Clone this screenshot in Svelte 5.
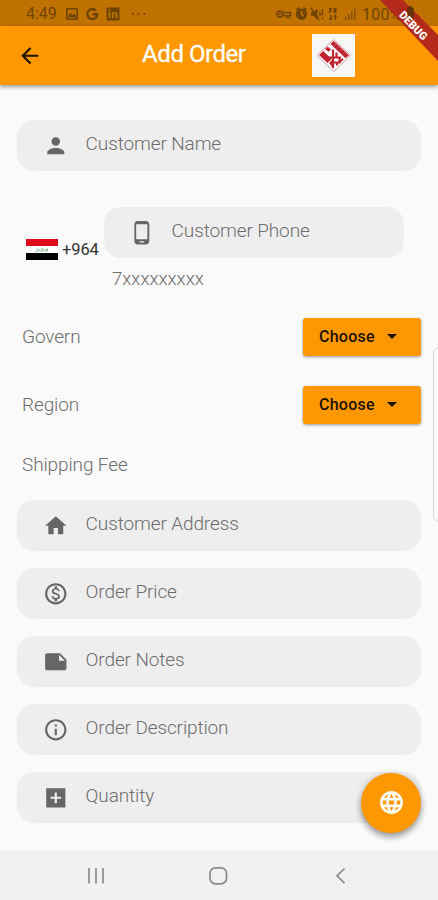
<script>
  const icons = {
    person: 'M12 12c2.21 0 4-1.79 4-4s-1.79-4-4-4-4 1.79-4 4 1.79 4 4 4zm0 2c-2.67 0-8 1.34-8 4v2h16v-2c0-2.66-5.33-4-8-4z',
    phone: 'M16 1H8C6.34 1 5 2.34 5 4v16c0 1.66 1.34 3 3 3h8c1.66 0 3-1.34 3-3V4c0-1.66-1.34-3-3-3zm-2 20h-4v-1h4v1zm3.25-3H6.75V4h10.5v14z',
    home: 'M10 20v-6h4v6h5v-8h3L12 3 2 12h3v8z',
    price: 'M12 2C6.48 2 2 6.48 2 12s4.48 10 10 10 10-4.48 10-10S17.52 2 12 2zm0 18c-4.41 0-8-3.59-8-8s3.59-8 8-8 8 3.59 8 8-3.59 8-8 8zm.31-8.86c-1.77-.45-2.34-.94-2.34-1.67 0-.84.79-1.43 2.1-1.43 1.38 0 1.9.66 1.94 1.64h1.71c-.05-1.34-.87-2.57-2.49-2.97V5H10.9v1.69c-1.51.32-2.72 1.3-2.72 2.81 0 1.79 1.49 2.69 3.66 3.21 1.95.46 2.34 1.15 2.34 1.87 0 .53-.39 1.39-2.1 1.39-1.6 0-2.23-.72-2.32-1.64H8.04c.1 1.7 1.36 2.66 2.86 2.97V19h2.34v-1.67c1.52-.29 2.72-1.16 2.73-2.77-.01-2.2-1.9-2.96-3.66-3.42z',
    note: 'M22 10l-6-6H4c-1.1 0-2 .9-2 2v12.01c0 1.1.9 1.99 2 1.99l16-.01c1.1 0 2-.89 2-1.99v-8zm-7-4.5l5.5 5.5H15V5.5z',
    info: 'M11 17h2v-6h-2v6zm1-15C6.48 2 2 6.48 2 12s4.48 10 10 10 10-4.48 10-10S17.52 2 12 2zm0 18c-4.41 0-8-3.59-8-8s3.59-8 8-8 8 3.59 8 8-3.59 8-8 8zM11 9h2V7h-2v2z',
    add: 'M21 3H3v18h18V3zm-4 10h-4v4h-2v-4H7v-2h4V7h2v4h4v2z'
  };
  const fields = [
    { icon: 'home', label: 'Customer Address' },
    { icon: 'price', label: 'Order Price' },
    { icon: 'note', label: 'Order Notes' },
    { icon: 'info', label: 'Order Description' },
    { icon: 'add', label: 'Quantity' }
  ];
  const selects = ['Govern', 'Region'];
</script>

{#snippet field(icon, label)}
  <div class="field">
    <svg class="ficon" viewBox="0 0 24 24"><path d={icons[icon]} /></svg>
    <span class="label">{label}</span>
  </div>
{/snippet}

<div class="screen">
  <div class="status">
    <span class="time">4:49</span>
    <svg class="notif" width="84" height="16" viewBox="0 0 84 16">
      <path fill-rule="evenodd" d="M3 2h10q1 0 1 1v10q0 1-1 1H3q-1 0-1-1V3q0-1 1-1zm.7 1.600v8.800h8.700V3.600zM4.500 11.500v-2l2.300-2.500 1.700 2 1.500-1.800 2 2.300v2z" />
      <path d="M32 4.700A5 5 0 1 0 33.300 8.300H28.500" fill="none" stroke="#6f4500" stroke-width="2.400" />
      <path fill-rule="evenodd" d="M43.500 1.500h11q1 0 1 1v11q0 1-1 1h-11q-1 0-1-1v-11q0-1 1-1zM44.500 6.300v6h1.800v-6zm0-2.800v1.700h1.800V3.500zM47.800 6.300v6h1.800V9q0-1.200 1-1.200t1 1.200v3.300h1.800V8.800q0-2.700-2.200-2.700-1 0-1.600.9v-.7z" />
      <circle cx="69" cy="8" r="1.100" /><circle cx="74.500" cy="8" r="1.100" /><circle cx="80.500" cy="8" r="1.100" />
    </svg>
    <svg class="sys" width="84" height="16" viewBox="0 0 84 16">
      <g fill="none" stroke="#6f4500" stroke-width="1.500">
        <circle cx="4" cy="8" r="3" /><circle cx="4" cy="8" r=".5" />
        <path d="M7 6.500h7.500v3H13v2h-2v-2H7.500" />
      </g>
      <path fill-rule="evenodd" d="M20 3l3-2 1 1.300-3 2zM31 3l-3-2-1 1.300 3 2zM25.500 2.500a5.700 5.700 0 1 0 .01 0zM24.700 5h1.500v3l2 1.600-.9 1.100-2.600-2z" />
      <path d="M35 6h2.500l4-3.500v11l-4-3.500H35z" />
      <path d="M35 2l8 12M43.500 6q1.500 2 0 4.500M46.500 3v6.500M46.500 11.500v2" fill="none" stroke="#6f4500" stroke-width="1.400" />
      <path d="M53 2h3v1.200h-1.500v.8H56v1.200h-1.500V7H53zM57.500 2h3v5h-3zM52.800 12h4l-2 2.700zM57.300 11h4l-2-2.700z" />
      <path d="M54.200 9h1.300v4h-1.300zM58.700 10h1.300v4h-1.300z" />
      <path d="M69 11h1.700v3H69zM72 8.500h1.700V14H72zM75 5.500h1.500V14H75zM78 2.500h1.500V14H78z" opacity=".7" />
    </svg>
    <span class="battery">100%</span>
  </div>

  <header>
    <svg class="back" viewBox="0 0 24 24"><path d="M20 11H7.830l5.590-5.590L12 4l-8 8 8 8 1.410-1.410L7.830 13H20v-2z" /></svg>
    <h1>Add Order</h1>
    <div class="logo">
      <svg width="43" height="43" viewBox="0 0 43 43">
        <path d="M21.700 5.500L38.500 21.300 21.700 37.500 5 21.300z" fill="#fff" stroke="#dc9a9f" stroke-width="1" />
        <path d="M21.700 7L37 21.300l-3.500 3L18.500 10z" fill="#c02330" />
        <path d="M22 12l3-3M25 14.500l3-3M28 17.500l3-3M31 20.500l3-3" stroke="#d8646c" stroke-width=".7" />
        <path d="M7 21l4.200-4 8.300 8-4 4zM13 15l2.700-2.500 3.300 3-2.500 2.300z" fill="#c02330" />
        <path d="M21 15.500V34M13 23.500h16M24.500 18.500v5M25 27.500v4M21 28.500h6.500v-5" fill="none" stroke="#c02330" stroke-width="2.200" />
        <path d="M17 29l4-4 1 10zM27.500 26.500l3-2.500 1 1.800-4.500 4z" fill="#c02330" />
      </svg>
    </div>
  </header>

  <main>
    {@render field('person', 'Customer Name')}

    <div class="phone">
      <div class="country">
        <svg width="32" height="21" viewBox="0 0 32 21">
          <rect width="32" height="21" fill="#fff" /><rect width="32" height="7" fill="#dc0b17" /><rect y="14" width="32" height="7" fill="#000" />
          <path d="M9.500 12h3.500V10M14 12h3l1-2M18.500 12h3V9.500M11 10l1-1M16 9v2.500M20 10v1.500" fill="none" stroke="#7fb08a" stroke-width=".9" />
        </svg>
        <span>+964</span>
      </div>
      <div class="entry">
        {@render field('phone', 'Customer Phone')}
        <div class="hint">7xxxxxxxxx</div>
      </div>
    </div>

    <div class="selects">
      {#each selects as name}
        <div class="row">
          <span class="label">{name}</span>
          <button>Choose<svg width="10" height="5" viewBox="0 0 10 5"><path d="M0 0h10L5 5z" /></svg></button>
        </div>
      {/each}
    </div>
    <div class="fee label">Shipping Fee</div>

    <div class="list">
      {#each fields as f}
        {@render field(f.icon, f.label)}
      {/each}
    </div>
  </main>

  <nav>
    <svg width="438" height="50" viewBox="0 0 438 50" fill="none" stroke="#8b8b8b" stroke-width="1.700">
      <path d="M89 18v15.500M96 18v15.500M103 18v15.500" />
      <rect x="210" y="17.800" width="16.500" height="16" rx="5.500" />
      <path d="M344.500 18.500l-7.500 7.300 7.500 7.300" />
    </svg>
  </nav>

  <div class="edge"></div>
  <button class="fab" aria-label="Language">
    <svg viewBox="0 0 24 24"><path d="M11.990 2C6.470 2 2 6.480 2 12s4.470 10 9.990 10C17.520 22 22 17.520 22 12S17.520 2 11.990 2zm6.930 6h-2.950c-.32-1.250-.78-2.450-1.380-3.560 1.840.63 3.370 1.910 4.330 3.560zM12 4.040c.83 1.200 1.480 2.530 1.910 3.960h-3.820c.43-1.430 1.080-2.760 1.910-3.960zM4.260 14C4.100 13.360 4 12.690 4 12s.1-1.360.26-2h3.380c-.08.66-.14 1.320-.14 2s.06 1.340.14 2H4.260zm.82 2h2.950c.32 1.250.78 2.450 1.380 3.560-1.840-.63-3.370-1.900-4.330-3.560zm2.950-8H5.080c.96-1.660 2.490-2.930 4.330-3.560C8.810 5.550 8.350 6.750 8.030 8zM12 19.960c-.83-1.200-1.480-2.530-1.910-3.960h3.820c-.43 1.430-1.080 2.760-1.910 3.960zM14.340 14H9.660c-.09-.66-.16-1.320-.16-2s.07-1.350.16-2h4.680c.09.65.16 1.320.16 2s-.07 1.340-.16 2zm.25 5.560c.6-1.110 1.060-2.310 1.380-3.560h2.950c-.96 1.650-2.490 2.930-4.330 3.560zM16.360 14c.08-.66.14-1.320.14-2s-.06-1.340-.14-2h3.380c.16.64.26 1.310.26 2s-.1 1.360-.26 2h-3.380z" /></svg>
  </button>
  <svg class="debug" width="64" height="64" viewBox="0 0 64 64">
    <path d="M6 0H29L64 35V61z" fill="#b3291a" />
    <path d="M33 7.500h2V6h3v1.500h2V20h-7z" fill="#57330a" opacity=".8" />
    <text transform="translate(39.500 25.500) rotate(46)" text-anchor="middle" y="4">DEBUG</text>
  </svg>
</div>

<style>
  :global(body) { margin: 0; }
  .screen { position: relative; width: 438px; height: 900px; overflow: hidden; display: flex; flex-direction: column; background: #fafafa; font-family: Roboto, "Noto Sans", sans-serif; }
  .status { height: 26px; flex: none; display: flex; align-items: center; background: #bf7200; color: #6f4500; fill: #6f4500; padding-left: 26px; }
  .time { width: 38px; font-size: 16px; line-height: 26px; padding-top: 2px; }
  .notif { margin-top: 1px; }
  .sys { margin: 2px 0 0 128px; }
  .battery { font-size: 16px; padding-top: 2px; margin-left: 2px; letter-spacing: 0.2px; }
  header { position: relative; z-index: 1; height: 59px; flex: none; display: flex; align-items: center; background: #ff9800; box-shadow: 0 2px 4px rgba(0, 0, 0, .38); }
  .back { width: 25.600px; height: 25.600px; margin-left: 17px; fill: #1d1300; }
  h1 { margin: 0 0 3px 99.500px; width: 170px; color: #fff; font-size: 24px; line-height: 30px; font-weight: 400; letter-spacing: -.45px; -webkit-text-stroke: .3px #fff; white-space: nowrap; }
  .logo { width: 43px; height: 43px; background: #f7f7f7; }
  .logo svg { display: block; }
  main { flex: 1; display: flex; flex-direction: column; padding: 35px 17px 0; }
  .field { height: 51px; flex: none; box-sizing: border-box; display: flex; align-items: center; border-radius: 17px; background: #eee; padding-left: 26px; }
  .ficon { width: 25.600px; height: 25.600px; fill: #666; }
  .label { color: #6d6d6d; font-size: 19px; line-height: 24px; font-weight: 300; letter-spacing: -.12px; white-space: nowrap; }
  .field .label { margin: -3px 0 0 17px; }
  .phone { display: flex; margin-top: 36px; height: 84px; }
  .country { display: flex; align-items: center; width: 87px; padding-left: 9px; box-sizing: border-box; gap: 4px; height: 84px; font-size: 16.500px; letter-spacing: -.1px; color: #333; }
  .entry { width: 300px; }
  .entry .field { padding-left: 25px; }
  .hint { color: #6d6d6d; font-size: 18.600px; font-weight: 300; line-height: 24px; margin: 9px 0 0 8px; }
  .selects { display: flex; flex-direction: column; gap: 30px; margin-top: 27px; }
  .row { display: flex; height: 38px; align-items: center; justify-content: space-between; padding-left: 5px; }
  .row button { display: flex; align-items: center; width: 118px; height: 38px; border: 0; border-radius: 3px; padding: 0 0 1px 16px; background: #ff9800; box-shadow: 0 1px 3px rgba(0, 0, 0, .4); font: 500 16px Roboto, sans-serif; color: #1b1100; letter-spacing: .25px; }
  .row button svg { margin-left: 12px; fill: #1b1100; }
  .fee { margin: 29px 0 0 5px; }
  .list { display: flex; flex-direction: column; gap: 17px; margin-top: 23px; }
  nav { height: 50px; flex: none; background: #f1f1f1; }
  nav svg { display: block; }
  .edge { position: absolute; left: 433px; top: 347px; width: 12px; height: 173px; border: 1px solid #d5d5d5; border-radius: 6px; }
  .fab { position: absolute; left: 361px; top: 772.500px; width: 60px; height: 60px; border: 0; border-radius: 50%; padding: 0; display: flex; align-items: center; justify-content: center; background: #ff9800; box-shadow: 0 4px 6px rgba(0, 0, 0, .33), 0 1px 8px rgba(0, 0, 0, .14); }
  .fab svg { width: 27px; height: 27px; fill: #fff; stroke: #fff; stroke-width: .4px; }
  .debug { position: absolute; z-index: 2; right: 0; top: 0; }
  .debug text { font: 900 11px Roboto, sans-serif; fill: #fff; }
</style>
